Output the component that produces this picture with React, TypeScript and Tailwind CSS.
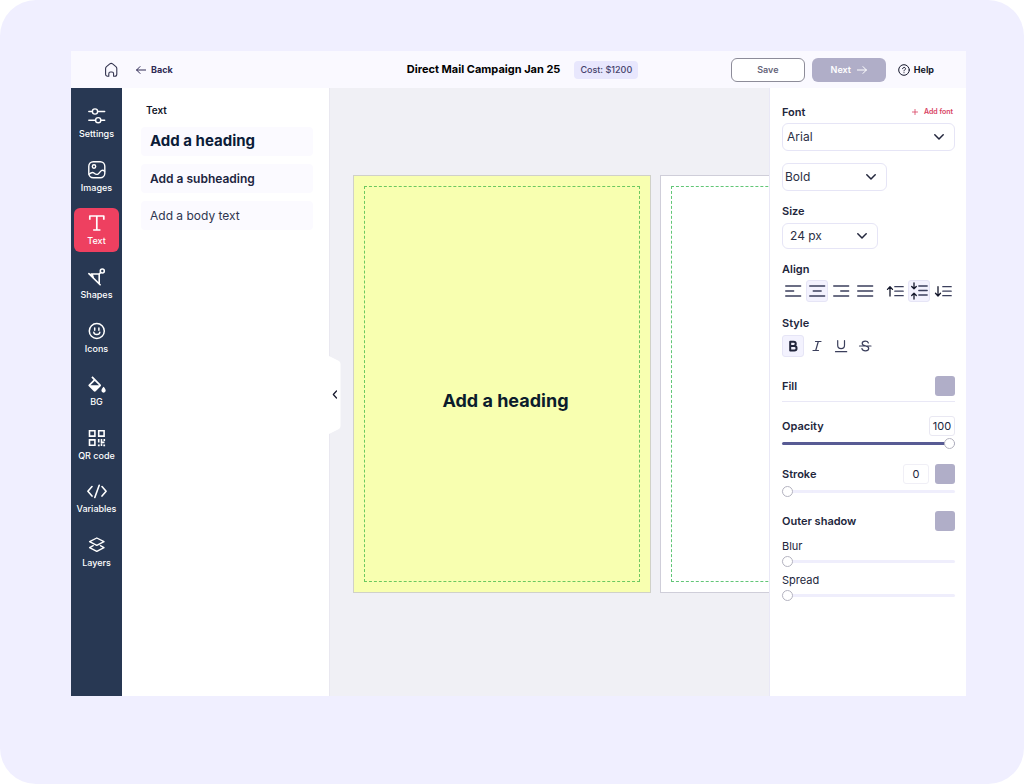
import { useState } from 'react'
import type { ReactNode } from 'react'

const stroke = {
    fill: 'none',
    stroke: 'currentColor',
    strokeLinecap: 'round',
    strokeLinejoin: 'round',
} as const

function Icon({ children, width = 1.5 }: { children: ReactNode; width?: number }) {
    return (
        <svg viewBox="0 0 18 18" className="size-[18px] shrink-0" strokeWidth={width} aria-hidden="true" {...stroke}>
            {children}
        </svg>
    )
}

const tools = [
    {
        name: 'Settings',
        icon: (
            <Icon width={1.4}>
                <circle cx="7" cy="4.5" r="2.6" />
                <circle cx="10.2" cy="13.2" r="2.6" />
                <path d="M.8 4.5h3.500M9.700 4.500h7M.8 13.200h6.700M12.900 13.200h3.800" />
            </Icon>
        ),
    },
    {
        name: 'Images',
        icon: (
            <Icon width={1.4}>
                <rect x=".8" y=".8" width="16" height="16" rx="4.5" />
                <circle cx="6" cy="5.500" r="1.7" />
                <path d="M1 13.200C2.700 11.800 4.200 10.800 5.700 11.800c1.500 1.200 2.500 2.300 4.200 1.300 1.600-1 2.300-3.100 4-3.700 1-.3 1.900.2 2.700.9" />
            </Icon>
        ),
    },
    {
        name: 'Text',
        icon: (
            <Icon width={1.7}>
                <path d="M1.800 5V2h14v3M8.800 2v14M6 16h5.600" strokeLinecap="square" />
            </Icon>
        ),
    },
    {
        name: 'Shapes',
        icon: (
            <Icon width={1.6}>
                <circle cx="14.300" cy="3" r="2" />
                <path d="M.9 5.600l11.200 11.200M3.200 6h8v9.600M4.200 6.600l1.300 3.600M11.500 5.700l1.300-1.200" />
            </Icon>
        ),
    },
    {
        name: 'Icons',
        icon: (
            <Icon width={1.5}>
                <circle cx="8.800" cy="9" r="7.500" />
                <path d="M6.700 6v2.200M10.900 6v2.200M5.800 10.200c.2 3 5.800 3 6 0" />
            </Icon>
        ),
    },
    {
        name: 'BG',
        icon: (
            <svg viewBox="2.500 -1.500 20 20" className="size-[18px] shrink-0" fill="currentColor" aria-hidden="true">
                <path d="M16.560 8.940L7.620 0 6.210 1.410l2.380 2.380-5.150 5.150a1.490 1.490 0 000 2.120l5.500 5.500c.29.29.68.44 1.060.44s.77-.15 1.060-.44l5.500-5.500c.59-.58.59-1.530 0-2.120zM5.210 10L10 5.210 14.790 10H5.210zM19.800 11.500s-2.400 2.400-2.400 4.200a2.400 2.400 0 004.800 0c0-1.800-2.400-4.200-2.400-4.200z" />
            </svg>
        ),
    },
    {
        name: 'QR code',
        icon: (
            <Icon width={1.6}>
                <path
                    d="M1.500 1.700h5.400v5.400H1.500zM10.700 1.700h5.400v5.400h-5.400zM1.500 10.900h5.400v5.400H1.500zM10.700 10v3.500M13.500 10v3.400h3M16.300 10v2M13.500 14.600v2.500M15.300 16.400h1.800M9.900 16.400h1.800"
                    strokeLinejoin="miter"
                    strokeLinecap="butt"
                />
            </Icon>
        ),
    },
    {
        name: 'Variables',
        icon: (
            <svg viewBox="0 0 20 18" className="h-[18px] w-5 shrink-0" strokeWidth={1.600} aria-hidden="true" {...stroke}>
                <path d="M5 4.500L.9 9.300 5 14.100M15 4.500l4.100 4.800L15 14.100M12.200 3.200L7.800 15.400" />
            </svg>
        ),
    },
    {
        name: 'Layers',
        icon: (
            <Icon width={1.4}>
                <path d="M8.800 2l7.200 3.700-7.200 3.700-7.200-3.700zM5.200 9.700l-3.600 2 7.200 3.700 7.200-3.700-3.600-2" />
            </Icon>
        ),
    },
]

const presets = [
    { label: 'Add a heading', style: 'text-[15px] font-bold text-[#0b1c38]' },
    { label: 'Add a subheading', style: 'text-xs font-semibold text-[#1c2540]' },
    { label: 'Add a body text', style: 'text-xs text-[#2f3650]' },
]

const alignments = [
    { name: 'Align left', d: 'M1.700 4h15M1.700 9h8M1.700 14h15' },
    { name: 'Align center', d: 'M1.700 4h15M5.200 9h8M1.700 14h15' },
    { name: 'Align right', d: 'M1.700 4h15M8.700 9h8M1.700 14h15' },
    { name: 'Justify', d: 'M1.700 4h15M1.700 9h15M1.700 14h15' },
]

const verticals = [
    { name: 'Align top', arrows: 'M4 14V5M1.500 7.400L4 4.700l2.500 2.700', lines: 'M8.800 4.700h8.400M8.800 9.200h8.400M8.800 13.700h8.400' },
    {
        name: 'Align middle',
        arrows: 'M4 .8v5.700M1.700 4.500L4 6.800l2.300-2.300M4 17v-5.500M1.700 13.500L4 11.200l2.300 2.300',
        lines: 'M8.800 4h8.400M8.800 8.500h8.400M8.800 13h8.400',
    },
    { name: 'Align bottom', arrows: 'M4 4.700v9M1.500 11.300L4 14l2.500-2.700', lines: 'M8.800 4.700h8.400M8.800 9.200h8.400M8.800 13.700h8.400' },
]

const styles = [
    { name: 'Bold', width: 2, d: 'M6.200 4.800h3.500a2 2 0 010 4.100H6.200zM6.200 8.900h4.100a2.200 2.200 0 010 4.500H6.200z' },
    { name: 'Italic', width: 1.2, d: 'M7.500 4.500h5.500M5 13.500h5.500M10.300 4.500l-2.600 9' },
    { name: 'Underline', width: 1.2, d: 'M5.700 3.500v4.700a3.400 3.400 0 006.800 0V3.500M3.500 14.700h11.200' },
    {
        name: 'Strikethrough',
        width: 1.2,
        d: 'M12.400 6C12 4.800 10.800 4.200 9.300 4.200c-1.900 0-3.100.9-3.100 2.200 0 3.400 6.500 1.600 6.500 5 0 1.500-1.300 2.400-3.300 2.400-1.900 0-3.100-.8-3.500-2.300M3.500 9h11.500',
    },
]

function ToolButton({ name, active, onClick, children }: { name: string; active: boolean; onClick: () => void; children: ReactNode }) {
    return (
        <button
            type="button"
            aria-label={name}
            aria-pressed={active}
            onClick={onClick}
            className={`flex size-[22px] items-center justify-center rounded-[3px] border ${active ? 'border-[#e6e5f6] bg-[#f3f2fe]' : 'border-transparent'}`}
        >
            {children}
        </button>
    )
}

function Select({ id, label, options, className, box }: { id: string; label: string; options: string[]; className: string; box: string }) {
    return (
        <div className={`relative ${box}`}>
            <select
                id={id}
                aria-label={label}
                className={`w-full appearance-none rounded-md border border-[#e6e5f6] bg-white text-xs text-[#2b2f45] ${className}`}
            >
                {options.map((option) => (
                    <option key={option}>{option}</option>
                ))}
            </select>
            <svg
                viewBox="0 0 10 6"
                className="pointer-events-none absolute top-1/2 right-[11px] h-1.5 w-2.5 -translate-y-1/2 text-[#22263c]"
                strokeWidth={1.5}
                aria-hidden="true"
                {...stroke}
            >
                <path d="M.8.8L5 5 9.200.8" />
            </svg>
        </div>
    )
}

function Slider({ id, label, value, onChange }: { id: string; label: string; value: number; onChange: (value: number) => void }) {
    return (
        <input
            id={id}
            type="range"
            aria-label={label}
            value={value}
            onChange={(e) => onChange(Number(e.target.value))}
            style={{ backgroundImage: `linear-gradient(to right, #585b94 ${value}%, #efeefc ${value}%)` }}
            className="block h-[3px] w-full appearance-none rounded-full [&::-webkit-slider-thumb]:size-[11px] [&::-webkit-slider-thumb]:appearance-none [&::-webkit-slider-thumb]:rounded-full [&::-webkit-slider-thumb]:border [&::-webkit-slider-thumb]:border-[#b4b3c0] [&::-webkit-slider-thumb]:bg-white"
        />
    )
}

function Swatch({ label }: { label: string }) {
    return <button type="button" aria-label={label} className="size-5 rounded-[3px] bg-[#b0aec8]" />
}

function Header() {
    return (
        <header className="flex h-[37px] items-center bg-[#faf9ff] text-[10px]">
            <div className="flex flex-1 items-center pl-8">
                <a href="#home" aria-label="Home" className="text-[#33344f]">
                    <Icon width={1.1}>
                        <path d="M2.600 7.600c0-.8.3-1.400.9-1.900l3.300-2.800c.9-.7 1.900-.7 2.800 0l3.300 2.800c.6.500.9 1.100.9 1.900v5.600c0 1.200-.8 2-2 2h-1.200v-2.500c0-1.100-.6-1.700-1.700-1.700h-1.400c-1.100 0-1.700.6-1.700 1.700v2.500H4.600c-1.200 0-2-.8-2-2z" />
                    </Icon>
                </a>
                <a href="#back" className="ml-[15px] flex items-center gap-[5px] text-[9px] font-bold text-[#2f2a55]">
                    <svg viewBox="0 0 10 8" className="h-2 w-2.5" strokeWidth={1} aria-hidden="true" {...stroke}>
                        <path d="M9.600 4H.6M4 .6L.6 4 4 7.400" />
                    </svg>
                    Back
                </a>
            </div>
            <div className="flex items-center gap-3.5 pl-2">
                <h1 className="text-[11px] font-bold text-black">Direct Mail Campaign Jan 25</h1>
                <span className="rounded-sm bg-[#e8e7fd] px-1.5 text-[9px] leading-[18px] font-medium text-[#45426b]">Cost: $1200</span>
            </div>
            <div className="flex flex-1 items-center justify-end pr-8">
                <button type="button" className="h-6 w-[74px] rounded-md border border-[#8d8c99] bg-white text-[9px] font-semibold text-[#66657a]">
                    Save
                </button>
                <button type="button" className="ml-[7px] flex h-6 w-[74px] items-center justify-center gap-1.5 rounded-md bg-[#b0aec8] text-[9px] font-semibold text-white">
                    Next
                    <svg viewBox="0 0 10 8" className="h-2 w-2.5" strokeWidth={1} aria-hidden="true" {...stroke}>
                        <path d="M.4 4h9M6 .6L9.400 4 6 7.400" />
                    </svg>
                </button>
                <a href="#help" className="ml-3 flex items-center gap-1 text-[9px] font-bold text-[#14172b]">
                    <svg viewBox="0 0 12 12" className="size-3" strokeWidth={1} aria-hidden="true" {...stroke}>
                        <circle cx="6" cy="6" r="5.300" />
                        <path d="M4.600 4.700c0-1.800 2.900-1.800 2.900 0 0 1-1.500 1.200-1.500 2.200M6 8.700v.1" />
                    </svg>
                    Help
                </a>
            </div>
        </header>
    )
}

function Sidebar() {
    const [current, setCurrent] = useState('Text')

    return (
        <nav className="w-[51px] shrink-0 bg-[#283853] px-[3px] pt-[13px]">
            <ul className="flex h-[473px] flex-col justify-between">
                {tools.map(({ name, icon }) => (
                    <li key={name}>
                        <button
                            type="button"
                            onClick={() => setCurrent(name)}
                            className={`flex h-11 w-full flex-col items-center gap-[3px] rounded-md pt-1.5 text-[9px] leading-3 font-medium whitespace-nowrap text-white ${current === name ? 'bg-[#ee4060]' : ''}`}
                        >
                            {icon}
                            {name}
                        </button>
                    </li>
                ))}
            </ul>
        </nav>
    )
}

function TextPanel() {
    return (
        <section className="w-[208px] shrink-0 border-r border-[#e9e8f0] bg-white pt-3.5 pr-4 pl-[19px]">
            <h2 className="pl-[5px] text-[10px] leading-4 font-semibold text-[#14172b]">Text</h2>
            <div className="mt-[9px] flex flex-col gap-2">
                {presets.map(({ label, style }) => (
                    <button key={label} type="button" className={`h-[29px] rounded-sm bg-[#fbfaff] pl-[9px] text-left ${style}`}>
                        {label}
                    </button>
                ))}
            </div>
        </section>
    )
}

function Canvas() {
    return (
        <main className="relative min-w-0 flex-1 bg-[#f0f0f5]">
            <button type="button" aria-label="Collapse panel" className="absolute top-[268px] -left-px h-[78px] w-3 text-[#14172b]">
                <svg viewBox="0 0 12 78" className="h-full w-full" aria-hidden="true">
                    <path d="M0 0l10 5q1.500 1 1.500 3v62q0 2-1.500 3L0 78z" fill="#fff" />
                    <path d="M7.500 35L4.300 38.500 7.500 42" strokeWidth={1.2} {...stroke} />
                </svg>
            </button>
            <div className="flex h-full items-start gap-[9px] overflow-hidden pt-[87px] pl-[23px]">
                <div className="h-[418px] w-[298px] shrink-0 border border-[#d0d1c8] bg-[#f8ffb0] p-2.5">
                    <div className="flex h-full items-center justify-center border border-dashed border-[#6cc860] pt-[34px] pl-[7px]">
                        <p className="text-lg font-bold text-[#0b1c2c]">Add a heading</p>
                    </div>
                </div>
                <div className="h-[418px] w-[298px] shrink-0 border border-[#cfced9] bg-white p-2.5">
                    <div className="h-full border border-dashed border-[#62c677]" />
                </div>
            </div>
        </main>
    )
}

function Properties() {
    const [align, setAlign] = useState('Align center')
    const [vertical, setVertical] = useState('Align middle')
    const [active, setActive] = useState('Bold')
    const [opacity, setOpacity] = useState(100)
    const [strokeWidth, setStrokeWidth] = useState(0)
    const [blur, setBlur] = useState(0)
    const [spread, setSpread] = useState(0)

    return (
        <aside className="w-[197px] shrink-0 border-l border-[#e9e8f6] bg-white pt-4 pr-[11px] pl-3 text-[11px] leading-4 text-[#22263c]">
            <div className="flex items-center justify-between">
                <label htmlFor="font" className="font-semibold">Font</label>
                <button type="button" className="flex items-center gap-1.5 pr-0.5 text-[7px] font-semibold text-[#d8405f]">
                    <svg viewBox="0 0 6 6" className="size-1.5" strokeWidth={0.8} aria-hidden="true" {...stroke}>
                        <path d="M3 .4v5.200M.4 3h5.200" />
                    </svg>
                    Add font
                </button>
            </div>
            <Select id="font" label="Font" options={['Arial', 'Georgia']} box="mt-[3px]" className="h-7 pl-1" />
            <Select id="weight" label="Weight" options={['Bold', 'Regular']} box="mt-3 w-[105px]" className="h-7 pl-0.5" />
            <label htmlFor="size" className="mt-3 block font-semibold">Size</label>
            <Select id="size" label="Size" options={['24 px', '32 px']} box="mt-1 w-24" className="h-[26px] pl-[7px]" />

            <h3 className="mt-3 font-semibold">Align</h3>
            <div className="mt-[3px] flex gap-0.5 text-[#3b3f5c]">
                {alignments.map(({ name, d }) => (
                    <ToolButton key={name} name={name} active={align === name} onClick={() => setAlign(name)}>
                        <Icon width={1.3}><path d={d} /></Icon>
                    </ToolButton>
                ))}
                <div className="ml-1.5 flex gap-0.5">
                    {verticals.map(({ name, arrows, lines }) => (
                        <ToolButton key={name} name={name} active={vertical === name} onClick={() => setVertical(name)}>
                            <Icon width={1.3}>
                                <path d={lines} />
                                <path d={arrows} stroke="#14172b" />
                            </Icon>
                        </ToolButton>
                    ))}
                </div>
            </div>

            <h3 className="mt-[13px] font-semibold">Style</h3>
            <div className="mt-1 flex gap-0.5 text-[#3b3f5c]">
                {styles.map(({ name, width, d }) => (
                    <ToolButton key={name} name={name} active={active === name} onClick={() => setActive(name)}>
                        <Icon width={width}><path d={d} stroke={active === name ? '#22263c' : 'currentColor'} /></Icon>
                    </ToolButton>
                ))}
            </div>

            <div className="mt-[19px] flex items-center justify-between border-b border-[#e9e8f6] pb-[5px]">
                <h3 className="font-semibold">Fill</h3>
                <Swatch label="Fill colour" />
            </div>

            <div className="mt-3.5 flex items-center justify-between">
                <label htmlFor="opacity" className="font-semibold">Opacity</label>
                <input
                    aria-label="Opacity value"
                    value={opacity}
                    onChange={(e) => setOpacity(Number(e.target.value) || 0)}
                    className="h-5 w-[26px] rounded-[3px] border border-[#e9e8f2] text-center text-[11px]"
                />
            </div>
            <div className="mt-1.5">
                <Slider id="opacity" label="Opacity" value={opacity} onChange={setOpacity} />
            </div>

            <div className="mt-[19px] flex items-center gap-1.5">
                <label htmlFor="stroke" className="mr-auto font-semibold">Stroke</label>
                <input
                    aria-label="Stroke value"
                    value={strokeWidth}
                    onChange={(e) => setStrokeWidth(Number(e.target.value) || 0)}
                    className="h-5 w-[26px] rounded-[3px] border border-[#f0eff6] text-center text-[11px]"
                />
                <Swatch label="Stroke colour" />
            </div>
            <div className="mt-1.5">
                <Slider id="stroke" label="Stroke" value={strokeWidth} onChange={setStrokeWidth} />
            </div>

            <div className="mt-[18px] flex items-center justify-between">
                <h3 className="font-semibold">Outer shadow</h3>
                <Swatch label="Shadow colour" />
            </div>
            <label htmlFor="blur" className="mt-[7px] block">Blur</label>
            <div className="mt-1.5">
                <Slider id="blur" label="Blur" value={blur} onChange={setBlur} />
            </div>
            <label htmlFor="spread" className="mt-[9px] block">Spread</label>
            <div className="mt-1.5">
                <Slider id="spread" label="Spread" value={spread} onChange={setSpread} />
            </div>
        </aside>
    )
}

export default function App() {
    return (
        <div className="flex min-h-screen flex-col rounded-[36px] bg-[#f0efff] pt-[51px] pr-[58px] pb-[88px] pl-[71px] font-['Inter',sans-serif]">
            <div className="flex flex-1 flex-col">
                <Header />
                <div className="flex flex-1">
                    <Sidebar />
                    <TextPanel />
                    <Canvas />
                    <Properties />
                </div>
            </div>
        </div>
    )
}
